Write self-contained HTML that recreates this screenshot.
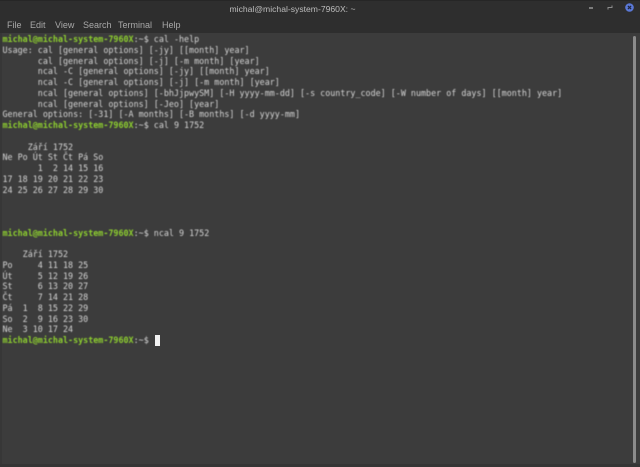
<!DOCTYPE html>
<html>
<head>
<meta charset="utf-8">
<style>
html,body{margin:0;padding:0;width:640px;height:467px;overflow:hidden;background:#3c3c3c}
#title{position:absolute;left:0;top:0;width:640px;height:33px;background:#2e2e2e;border-top:1px solid #262626;box-sizing:border-box}
#titletext{position:absolute;left:229.5px;top:3px;white-space:nowrap;font:8.6px/13px "Liberation Sans",sans-serif;color:#bdbdbd;filter:blur(.35px)}
.m{position:absolute;top:19px;font:9px/12px "Liberation Sans",sans-serif;color:#a8a8a8;filter:blur(.35px)}
#term{position:absolute;left:2.5px;top:34px;margin:0;font-family:"DejaVu Sans Mono",monospace;font-size:8.4px;line-height:10.75px;color:#d6d6d6;white-space:pre;filter:blur(.4px)}
#term b{color:#8ed02f;font-weight:bold}
#term i{font-style:normal;color:#d6d6d6}
#cursor{position:absolute;left:154.5px;top:335px;width:5px;height:11px;background:#f2f2f2}
#sb{position:absolute;left:632.7px;top:35.5px;width:3.5px;height:427.5px;background:#8b8b8b;border-radius:2px}
#bl{position:absolute;left:0;top:33px;width:2px;height:434px;background:#373737}
#bb{position:absolute;left:0;top:464px;width:640px;height:3px;background:#353535}
</style>
</head>
<body>
<div id="title"></div>
<div id="titletext">michal@michal-system-7960X: ~</div>
<span class="m" style="left:7px">File</span>
<span class="m" style="left:30px">Edit</span>
<span class="m" style="left:55px">View</span>
<span class="m" style="left:83px">Search</span>
<span class="m" style="left:118px">Terminal</span>
<span class="m" style="left:162px">Help</span>
<svg style="position:absolute;left:585px;top:3px;filter:blur(.3px)" width="55" height="14" viewBox="0 0 55 14">
<path d="M4 5h4" stroke="#b0b0b0" stroke-width="1.2"/>
<path d="M23 6.5v-2h2M27 2.5v2h-2" stroke="#8c8c8c" stroke-width="1" fill="none"/>
<circle cx="44.5" cy="4.5" r="4.3" fill="#5a78d6"/>
<path d="M42.9 2.9l3.2 3.2M46.1 2.9l-3.2 3.2" stroke="#20243a" stroke-width="1.2"/>
</svg>
<div id="bl"></div>
<pre id="term"><b>michal@michal-system-7960X</b><i>:~$ cal -help</i>
Usage: cal [general options] [-jy] [[month] year]
       cal [general options] [-j] [-m month] [year]
       ncal -C [general options] [-jy] [[month] year]
       ncal -C [general options] [-j] [-m month] [year]
       ncal [general options] [-bhJjpwySM] [-H yyyy-mm-dd] [-s country_code] [-W number of days] [[month] year]
       ncal [general options] [-Jeo] [year]
General options: [-31] [-A months] [-B months] [-d yyyy-mm]
<b>michal@michal-system-7960X</b><i>:~$ cal 9 1752</i>

     Září 1752
Ne Po Út St Čt Pá So
       1  2 14 15 16
17 18 19 20 21 22 23
24 25 26 27 28 29 30



<b>michal@michal-system-7960X</b><i>:~$ ncal 9 1752</i>

    Září 1752
Po     4 11 18 25
Út     5 12 19 26
St     6 13 20 27
Čt     7 14 21 28
Pá  1  8 15 22 29
So  2  9 16 23 30
Ne  3 10 17 24
<b>michal@michal-system-7960X</b><i>:~$</i></pre>
<div id="cursor"></div>
<div id="sb"></div>
<div id="bb"></div>
</body>
</html>
